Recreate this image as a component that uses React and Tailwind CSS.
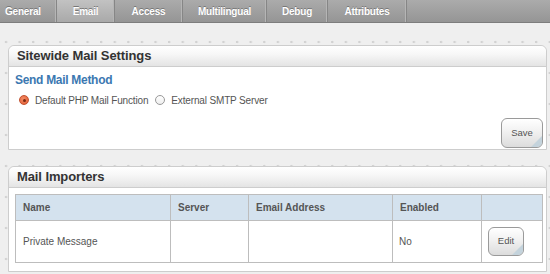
const tabs = [
  { label: 'General', w: 'w-[57px] justify-start pl-[5px]' },
  { label: 'Email', w: 'w-[58px] justify-center' },
  { label: 'Access', w: 'w-[68px] justify-center' },
  { label: 'Multilingual', w: 'w-[84px] justify-center' },
  { label: 'Debug', w: 'w-[61px] justify-center' },
  { label: 'Attributes', w: 'w-[79px] justify-center' },
];

function GlossButton({ label, className = '' }) {
  return (
    <button
      type="button"
      className={`relative overflow-hidden rounded-[6px] border border-[#9a9a9a] bg-[linear-gradient(#ffffff,#f1f1f1_45%,#dcdcdc)] text-[9.5px] text-[#555] shadow-[inset_0_1px_0_#fff] ${className}`}
    >
      <span className="relative z-10">{label}</span>
      <span className="absolute bottom-0 right-0 h-0 w-0 border-b-[11px] border-l-[11px] border-b-[#c4d3dc] border-l-transparent" />
    </button>
  );
}

function Radio({ checked, label }) {
  return (
    <label className="flex items-center gap-[6px]">
      {checked ? (
        <span className="flex h-[10px] w-[10px] items-center justify-center rounded-full border border-[#c2502d] bg-[radial-gradient(circle_at_40%_35%,#f38a63,#e05b33)]">
          <span className="h-[3px] w-[3px] rounded-full bg-[#7a2a12]" />
        </span>
      ) : (
        <span className="h-[10px] w-[10px] rounded-full border border-[#999] bg-[linear-gradient(#fff,#eee)]" />
      )}
      <span>{label}</span>
    </label>
  );
}

function Panel({ title, children, className = '' }) {
  return (
    <div className={`ml-[8px] w-[539px] rounded-t-[6px] border border-[#cdcdcd] bg-white ${className}`}>
      <div className="flex h-[21px] items-center rounded-t-[6px] border-b border-[#cdcdcd] bg-[linear-gradient(#ffffff,#f7f7f7_40%,#e4e4e4)] pl-[8px] text-[13px] font-bold tracking-[-0.1px] text-[#333]">
        {title}
      </div>
      {children}
    </div>
  );
}

export default function App() {
  return (
    <div
      className="h-[274px] w-[550px] overflow-hidden bg-[#efefef] bg-[radial-gradient(circle_at_6px_11px,#d2d2d2_1px,transparent_1.6px)] bg-[size:13.6px_31px] text-[#555]"
      style={{ fontFamily: '"Liberation Sans", Arial, sans-serif' }}
    >
      {/* Tab bar */}
      <div className="flex h-[23px] border-b border-[#7d7d7d] bg-[linear-gradient(#ababab,#959595)]">
        {tabs.map(t => (
          <div
            key={t.label}
            className={`flex h-full shrink-0 items-center border-r border-[#868686] text-[10px] font-bold tracking-[-0.2px] text-white shadow-[inset_-1px_0_0_#b5b5b5] [text-shadow:0_-1px_0_#777] ${t.w} ${
              t.label === 'Email' ? 'bg-[linear-gradient(#c2c2c2,#a9a9a9)]' : ''
            }`}
          >
            {t.label}
          </div>
        ))}
      </div>

      <div className="pt-[22px]">
        <Panel title="Sitewide Mail Settings">
          <div className="h-[82px] pl-[6px] pr-[3px] pt-[5px]">
            <div className="text-[12px] font-bold leading-[16px] tracking-[-0.3px] text-[#3b78b1]">Send Mail Method</div>
            <div className="mt-[5px] flex h-[14px] items-center gap-[7px] pl-[4px] text-[10px] tracking-[-0.15px]">
              <Radio checked label="Default PHP Mail Function" />
              <Radio label="External SMTP Server" />
            </div>
            <div className="mt-[11px] flex justify-end">
              <GlossButton label="Save" className="h-[30px] w-[42px]" />
            </div>
          </div>
        </Panel>

        <Panel title="Mail Importers" className="mt-[16px]">
          <div className="px-[6px] pt-[6px] pb-[8px]">
            <table className="w-[527px] table-fixed border-collapse text-[10px]">
              <colgroup>
                <col className="w-[155px]" />
                <col className="w-[78px]" />
                <col className="w-[144px]" />
                <col className="w-[89px]" />
                <col className="w-[61px]" />
              </colgroup>
              <thead>
                <tr className="h-[26px] bg-[#d4e2ee] text-left font-bold">
                  <th className="border border-[#bdbdbd] pl-[7px]">Name</th>
                  <th className="border border-[#bdbdbd] pl-[7px]">Server</th>
                  <th className="border border-[#bdbdbd] pl-[7px]">Email Address</th>
                  <th className="border border-[#bdbdbd] pl-[7px]">Enabled</th>
                  <th className="border border-[#bdbdbd]" />
                </tr>
              </thead>
              <tbody>
                <tr className="h-[42px]">
                  <td className="border border-[#bdbdbd] pl-[7px]">Private Message</td>
                  <td className="border border-[#bdbdbd]" />
                  <td className="border border-[#bdbdbd]" />
                  <td className="border border-[#bdbdbd] pl-[6px]">No</td>
                  <td className="border border-[#bdbdbd] pl-[6px]">
                    <GlossButton label="Edit" className="h-[29px] w-[36px]" />
                  </td>
                </tr>
              </tbody>
            </table>
          </div>
        </Panel>
      </div>
    </div>
  );
}
